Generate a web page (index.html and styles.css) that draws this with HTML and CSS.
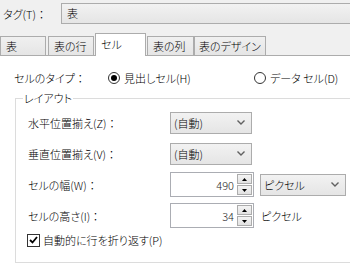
FILE: index.html
```html
<!DOCTYPE html>
<html lang="ja">
<head>
    <meta charset="UTF-8">
    <title>表のプロパティ</title>
    <link rel="stylesheet" href="styles.css">
</head>
<body>
    <div class="tag-row">
        <span class="tag-label">タグ(T)<span class="colon">：</span></span>
        <div class="tag-combo">表</div>
    </div>

    <div class="tabs">
        <div class="tab tab-w1">表</div>
        <div class="tab tab-w2">表の行</div>
        <div class="tab active">セル</div>
        <div class="tab tab-w3">表の列</div>
        <div class="tab tab-w4">表のデザイン</div>
    </div>

    <div class="panel">
        <div class="type-row">
            <span class="type-label">セルのタイプ<span class="colon">：</span></span>
            <label class="radio radio-head"><span class="radio-dot checked"></span>見出しセル(H)</label>
            <label class="radio"><span class="radio-dot"></span>データ セル(D)</label>
        </div>

        <fieldset class="group">
            <legend>レイアウト</legend>

            <div class="field">
                <span class="field-label">水平位置揃え(Z)<span class="colon">：</span></span>
                <div class="select">(自動)
                    <svg class="chev" width="8" height="5" viewBox="0 0 8 5"><path d="M0.5 0.5 L4 4 L7.5 0.5" fill="none" stroke="#606060" stroke-width="1.4"/></svg>
                </div>
            </div>

            <div class="field">
                <span class="field-label">垂直位置揃え(V)<span class="colon">：</span></span>
                <div class="select">(自動)
                    <svg class="chev" width="8" height="5" viewBox="0 0 8 5"><path d="M0.5 0.5 L4 4 L7.5 0.5" fill="none" stroke="#606060" stroke-width="1.4"/></svg>
                </div>
            </div>

            <div class="field">
                <span class="field-label">セルの幅(W)<span class="colon">：</span></span>
                <div class="spin">
                    <span class="spin-value">490</span>
                    <div class="spin-btns">
                        <span class="spin-btn"><svg width="5" height="3" viewBox="0 0 5 3"><path d="M0 3 L2.5 0 L5 3 Z" fill="#000"/></svg></span>
                        <span class="spin-btn"><svg width="5" height="3" viewBox="0 0 5 3"><path d="M0 0 L2.5 3 L5 0 Z" fill="#000"/></svg></span>
                    </div>
                </div>
                <div class="select unit-select">ピクセル
                    <svg class="chev" width="8" height="5" viewBox="0 0 8 5"><path d="M0.5 0.5 L4 4 L7.5 0.5" fill="none" stroke="#606060" stroke-width="1.4"/></svg>
                </div>
            </div>

            <div class="field">
                <span class="field-label">セルの高さ(I)<span class="colon">：</span></span>
                <div class="spin">
                    <span class="spin-value">34</span>
                    <div class="spin-btns">
                        <span class="spin-btn"><svg width="5" height="3" viewBox="0 0 5 3"><path d="M0 3 L2.5 0 L5 3 Z" fill="#000"/></svg></span>
                        <span class="spin-btn"><svg width="5" height="3" viewBox="0 0 5 3"><path d="M0 0 L2.5 3 L5 0 Z" fill="#000"/></svg></span>
                    </div>
                </div>
                <span class="unit-text">ピクセル</span>
            </div>

            <label class="check-row">
                <span class="check-box"><svg width="9" height="8" viewBox="0 0 9 8"><path d="M1 4 L3.5 6.5 L8 1" fill="none" stroke="#000" stroke-width="1.8"/></svg></span>
                自動的に行を折り返す(P)
            </label>
        </fieldset>
    </div>
</body>
</html>
```

FILE: styles.css
```css
body {
    margin: 0;
    width: 350px;
    height: 266px;
    overflow: hidden;
    background: #f0f0f0;
    color: #000;
    font-family: "Noto Sans CJK JP", "Noto Sans", sans-serif;
    font-size: 11px;
    font-weight: 300;
    line-height: 16px;
    font-feature-settings: "palt";
}
.colon {
    font-feature-settings: normal;
}
.tag-row {
    display: flex;
    align-items: center;
    padding: 3px 0 0 3px;
}
.tag-label {
    width: 58px;
}
.tag-combo {
    flex: 1;
    height: 19px;
    line-height: 19px;
    padding-left: 5px;
    margin-right: -4px;
    border: 1px solid #acacac;
    background: linear-gradient(#f2f2f2, #e5e5e5);
}
.tabs {
    display: flex;
    align-items: flex-end;
    height: 22px;
    margin-top: 9px;
}
.tab {
    box-sizing: border-box;
    height: 19px;
    padding: 1px 0 0 5px;
    border: 1px solid #acacac;
    border-bottom: none;
    background: linear-gradient(#f0f0f0, #e5e5e5);
    white-space: nowrap;
}
.tab-w1 {
    width: 46px;
    margin-right: 2px;
}
.tab-w2 {
    width: 46px;
}
.tab-w3 {
    width: 47px;
}
.tab-w4 {
    min-width: 69px;
    padding-right: 4px;
    padding-left: 4px;
}
.tab.active {
    width: 51px;
    height: 23px;
    margin: 0 1px 0 1px;
    padding-top: 2px;
    background: #fff;
    position: relative;
    top: 1px;
}
.panel {
    background: #fff;
    border-top: 1px solid #acacac;
    height: 211px;
    padding: 14px 0 0 14px;
    box-sizing: border-box;
    overflow: hidden;
}
.type-row {
    display: flex;
    align-items: center;
    height: 16px;
}
.type-label {
    width: 94px;
}
.radio {
    display: flex;
    align-items: center;
}
.radio-head {
    width: 146px;
}
.radio-dot {
    box-sizing: border-box;
    width: 12px;
    height: 12px;
    margin-right: 4px;
    border: 1px solid #333;
    border-radius: 50%;
    background: #fff;
    position: relative;
}
.radio-dot.checked::after {
    content: "";
    position: absolute;
    left: 2px;
    top: 2px;
    width: 6px;
    height: 6px;
    border-radius: 50%;
    background: #000;
}
.group {
    margin: 4px -10px 0 1px;
    padding: 1px 0 14px 12px;
    border: 1px solid #dcdcdc;
    min-width: 0;
}
.group legend {
    margin-left: -5px;
    padding: 0 1px;
    line-height: 16px;
}
.field {
    display: flex;
    align-items: center;
    height: 31px;
}
.field-label {
    width: 142px;
}
.select {
    box-sizing: border-box;
    display: flex;
    align-items: center;
    justify-content: space-between;
    width: 82px;
    height: 22px;
    padding: 0 6px 0 3px;
    border: 1px solid #acacac;
    background: linear-gradient(#f2f2f2, #e5e5e5);
}
.unit-select {
    width: 86px;
    margin-left: 6px;
    padding-left: 3px;
}
.spin {
    box-sizing: border-box;
    display: flex;
    align-items: center;
    width: 84px;
    height: 25px;
    border: 1px solid #abadb3;
    background: #fff;
}
.spin-value {
    flex: 1;
    text-align: right;
    padding-right: 3px;
    color: #1e1e1e;
}
.spin-btns {
    display: flex;
    flex-direction: column;
    gap: 1px;
    margin-right: 1px;
}
.spin-btn {
    box-sizing: border-box;
    display: flex;
    align-items: center;
    justify-content: center;
    width: 15px;
    height: 10px;
    border: 1px solid #acacac;
    background: linear-gradient(#f4f4f4, #e2e2e2);
}
.unit-text {
    margin-left: 7px;
}
.check-row {
    display: flex;
    align-items: center;
    height: 16px;
    margin-top: 1px;
    margin-left: -1px;
}
.check-box {
    box-sizing: border-box;
    display: flex;
    align-items: center;
    justify-content: center;
    width: 13px;
    height: 13px;
    margin-right: 3px;
    border: 1px solid #333;
    background: #fff;
}
```
